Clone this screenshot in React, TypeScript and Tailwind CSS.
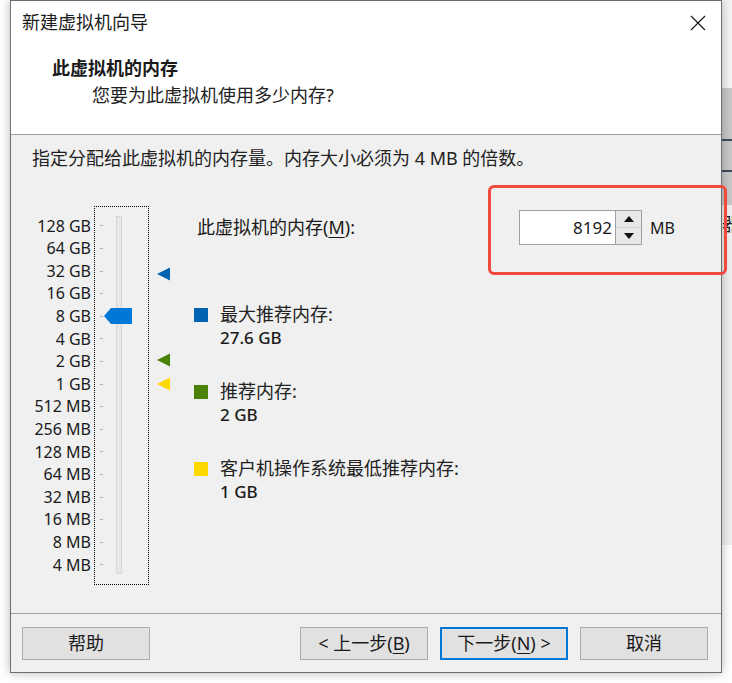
import React from 'react'

const scale = [
  '128 GB', '64 GB', '32 GB', '16 GB', '8 GB', '4 GB', '2 GB', '1 GB',
  '512 MB', '256 MB', '128 MB', '64 MB', '32 MB', '16 MB', '8 MB', '4 MB',
]

const legend = [
  { color: 'bg-[#0063b1]', label: '最大推荐内存:', value: '27.6 GB' },
  { color: 'bg-[#498205]', label: '推荐内存:', value: '2 GB' },
  { color: 'bg-[#ffd800]', label: '客户机操作系统最低推荐内存:', value: '1 GB' },
]

function Marker({ color, top }: { color: string; top: string }) {
  return (
    <svg className={`absolute left-0 ${top}`} width="14" height="14" viewBox="0 0 14 14">
      <polygon points="0,7 13,0.5 13,13.5" fill={color} />
    </svg>
  )
}

function WizardButton({ children, primary }: { children: React.ReactNode; primary?: boolean }) {
  return (
    <button
      className={`w-[128px] h-[33px] flex items-center justify-center text-[18px] text-[#1a1a1a] bg-[#e1e1e1] ${
        primary ? 'border-2 border-[#0078d7]' : 'border border-[#adadad]'
      }`}
    >
      {children}
    </button>
  )
}

export default function App() {
  return (
    <div className="relative w-[732px] h-[683px] overflow-hidden bg-white flex font-['Noto_Sans','Noto_Sans_CJK_SC',sans-serif] text-[#1a1a1a]">
      <div className="w-[10px] shrink-0" />

      {/* dialog */}
      <div className="w-[712px] h-[673px] shrink-0 flex flex-col border border-[#6f6f6f] bg-[#f0f0f0] shadow-[0_0_10px_rgba(0,0,0,0.28)] z-10">
        {/* header */}
        <div className="h-[134px] shrink-0 bg-white border-b border-[#a0a0a0] flex flex-col">
          <div className="h-[43px] flex items-center pl-[11px]">
            <span className="text-[18px]">新建虚拟机向导</span>
            <div className="ml-auto w-[46px] h-[43px] flex items-center justify-center">
              <svg width="16" height="16" viewBox="0 0 16 16">
                <path d="M1 1 L15 15 M15 1 L1 15" stroke="#111" strokeWidth="1.1" />
              </svg>
            </div>
          </div>
          <div className="mt-[12px] pl-[41px] h-[24px] leading-[24px] text-[18px] font-bold">此虚拟机的内存</div>
          <div className="mt-[3px] pl-[81px] h-[24px] leading-[24px] text-[18px] text-[#222]">您要为此虚拟机使用多少内存?</div>
        </div>

        {/* body */}
        <div className="h-[478px] shrink-0 pt-[11px] pl-[21px]">
          <div className="h-[24px] leading-[24px] text-[18px] text-[#222]">
            指定分配给此虚拟机的内存量。内存大小必须为 4 MB 的倍数。
          </div>

          <div className="mt-[36px] -ml-[21px] flex">
            {/* scale labels */}
            <div className="w-[80px] pt-[8.7px] flex flex-col items-end">
              {scale.map((s) => (
                <div key={s} className="h-[22.6px] leading-[22.6px] text-[16px] whitespace-nowrap">
                  {s}
                </div>
              ))}
            </div>

            {/* slider */}
            <div className="relative ml-[3px] w-[55px] h-[379px] border border-dotted border-black flex">
              <div className="ml-[5px] pt-[7.7px] flex flex-col">
                {scale.map((s) => (
                  <div key={s} className="h-[22.6px] flex items-center">
                    <div className="w-[3px] h-px bg-[#b4b4b4]" />
                  </div>
                ))}
              </div>
              <div className="ml-[13px] mt-[9px] w-[6px] h-[358px] bg-[#e7e7e7] border border-[#d6d6d6]" />
              <svg className="absolute left-[9px] top-[101px]" width="28" height="16" viewBox="0 0 28 16">
                <polygon points="0,8 7,0 28,0 28,16 7,16" fill="#0078d7" />
              </svg>
            </div>

            {/* markers */}
            <div className="relative ml-[8px] w-[14px]">
              <Marker color="#0063b1" top="top-[61px]" />
              <Marker color="#498205" top="top-[147px]" />
              <Marker color="#ffd800" top="top-[171px]" />
            </div>

            {/* right side */}
            <div className="ml-[23px] flex flex-col">
              <div className="mt-[4px] h-[35px] flex items-center">
                <div className="w-[325px] pl-[3px] text-[18px]">
                  此虚拟机的内存(<span className="underline underline-offset-[3px]">M</span>):
                </div>
                <div className="w-[96px] h-[35px] bg-white border border-[#a0a0a0] border-r-0 flex items-center justify-end pr-[3px] text-[17px]">
                  8192
                </div>
                <div className="w-[27px] h-[35px] border border-[#a0a0a0] bg-[#f0f0f0] flex flex-col">
                  <div className="flex-1 flex items-center justify-center border-b border-[#d0d0d0] bg-[#e8e8e8]">
                    <svg width="10" height="6" viewBox="0 0 10 6"><polygon points="5,0 10,6 0,6" fill="#111" /></svg>
                  </div>
                  <div className="flex-1 flex items-center justify-center bg-[#e8e8e8]">
                    <svg width="10" height="6" viewBox="0 0 10 6"><polygon points="0,0 10,0 5,6" fill="#111" /></svg>
                  </div>
                </div>
                <span className="ml-[8px] text-[16px]">MB</span>
              </div>

              <div className="mt-[58px] flex flex-col gap-[31px]">
                {legend.map((l) => (
                  <div key={l.label} className="flex gap-[12px]">
                    <div className={`mt-[4.5px] w-[14px] h-[14px] ${l.color}`} />
                    <div className="flex flex-col">
                      <div className="h-[23px] leading-[23px] text-[18px] text-[#222]">{l.label}</div>
                      <div className="h-[23px] leading-[23px] text-[17px] font-medium">{l.value}</div>
                    </div>
                  </div>
                ))}
              </div>
            </div>
          </div>
        </div>

        {/* footer */}
        <div className="flex-1 border-t border-[#a0a0a0] pt-[13px] pl-[11px] pr-[13px] flex items-start">
          <WizardButton>帮助</WizardButton>
          <div className="ml-auto flex gap-[12px]">
            <WizardButton>
              &lt; 上一步(<span className="underline underline-offset-[3px]">B</span>)
            </WizardButton>
            <WizardButton primary>
              下一步(<span className="underline underline-offset-[3px]">N</span>) &gt;
            </WizardButton>
            <WizardButton>取消</WizardButton>
          </div>
        </div>
      </div>

      {/* background window peeking out on the right */}
      <div className="flex-1 flex flex-col overflow-hidden">
        <div className="h-[88px] bg-[#f5f5f5]" />
        <div className="h-[51px] bg-[#c8c8c8]" />
        <div className="h-[2px] bg-[#3d4b5b]" />
        <div className="h-[29px] bg-[#c8c8c8]" />
        <div className="h-[2px] bg-[#3d4b5b]" />
        <div className="h-[33px] bg-[#c8c8c8]" />
        <div className="h-[340px] bg-[#efefef] pt-[7px] text-[18px] leading-[24px] whitespace-nowrap">器</div>
        <div className="flex-1 bg-white" />
      </div>

      {/* annotation */}
      <div className="absolute left-[488px] top-[185px] w-[239px] h-[90px] border-[3px] border-[#f04a40] rounded-[6px] z-20" />
    </div>
  )
}
